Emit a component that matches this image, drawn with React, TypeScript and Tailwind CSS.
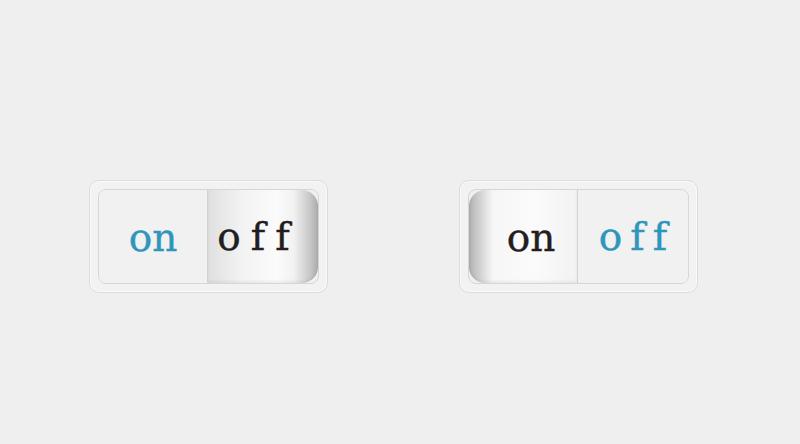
import React from 'react';

const serif = { fontFamily: '"DejaVu Serif", "Liberation Serif", serif' };

const Frame = ({ children }: { children: React.ReactNode }) => (
  <div className="w-[239px] h-[113px] rounded-[10px] border border-[#dcdcdc] bg-[#f2f2f2] p-[8px] shadow-[inset_0_0_0_1px_#fafafa]">
    <div className="flex h-full w-full rounded-[8px] border border-[#d6d6d6] bg-[#f0f0f0] overflow-hidden">
      {children}
    </div>
  </div>
);

const ToggleOff = () => (
  <Frame>
    <div className="flex w-[109px] items-center justify-center border-r border-[#d2d2d2] bg-[#f1f1f1]">
      <span className="text-[39px] leading-none text-[#2f96bb] pt-[2px] [-webkit-text-stroke:0.4px_#2f96bb]" style={serif}>on</span>
    </div>
    <div className="flex flex-1 items-center justify-center rounded-r-[16px] bg-[linear-gradient(to_right,#e0e0e0,#f2f2f2_30%,#fbfbfb_62%,#f2f2f2_78%,#c6c6c6_93%,#acacac)] shadow-[inset_0_-2px_3px_rgba(0,0,0,0.06)]">
      <span className="text-[39px] leading-none text-[#231d1d] tracking-[10px] pr-[9px] [-webkit-text-stroke:0.4px_#231d1d]" style={serif}>off</span>
    </div>
  </Frame>
);

const ToggleOn = () => (
  <Frame>
    <div className="flex w-[109px] items-center justify-center rounded-l-[16px] border-r border-[#d2d2d2] bg-[linear-gradient(to_right,#acacac,#c2c2c2_5%,#dadada_13%,#f6f6f6_22%,#fbfbfb_60%,#f2f2f2)] shadow-[inset_0_-2px_3px_rgba(0,0,0,0.06)]">
      <span className="text-[39px] leading-none text-[#231d1d] pl-[16px] pt-[2px] [-webkit-text-stroke:0.4px_#231d1d]" style={serif}>on</span>
    </div>
    <div className="flex flex-1 items-center justify-center bg-[#f1f1f1]">
      <span className="text-[39px] leading-none text-[#2f96bb] tracking-[8px] pl-[8px] [-webkit-text-stroke:0.4px_#2f96bb]" style={serif}>off</span>
    </div>
  </Frame>
);

export default function App() {
  return (
    <div className="w-[800px] h-[444px] bg-[#efefef] flex items-start pt-[180px] pl-[89px] gap-[131px]">
      <ToggleOff />
      <ToggleOn />
    </div>
  );
}
